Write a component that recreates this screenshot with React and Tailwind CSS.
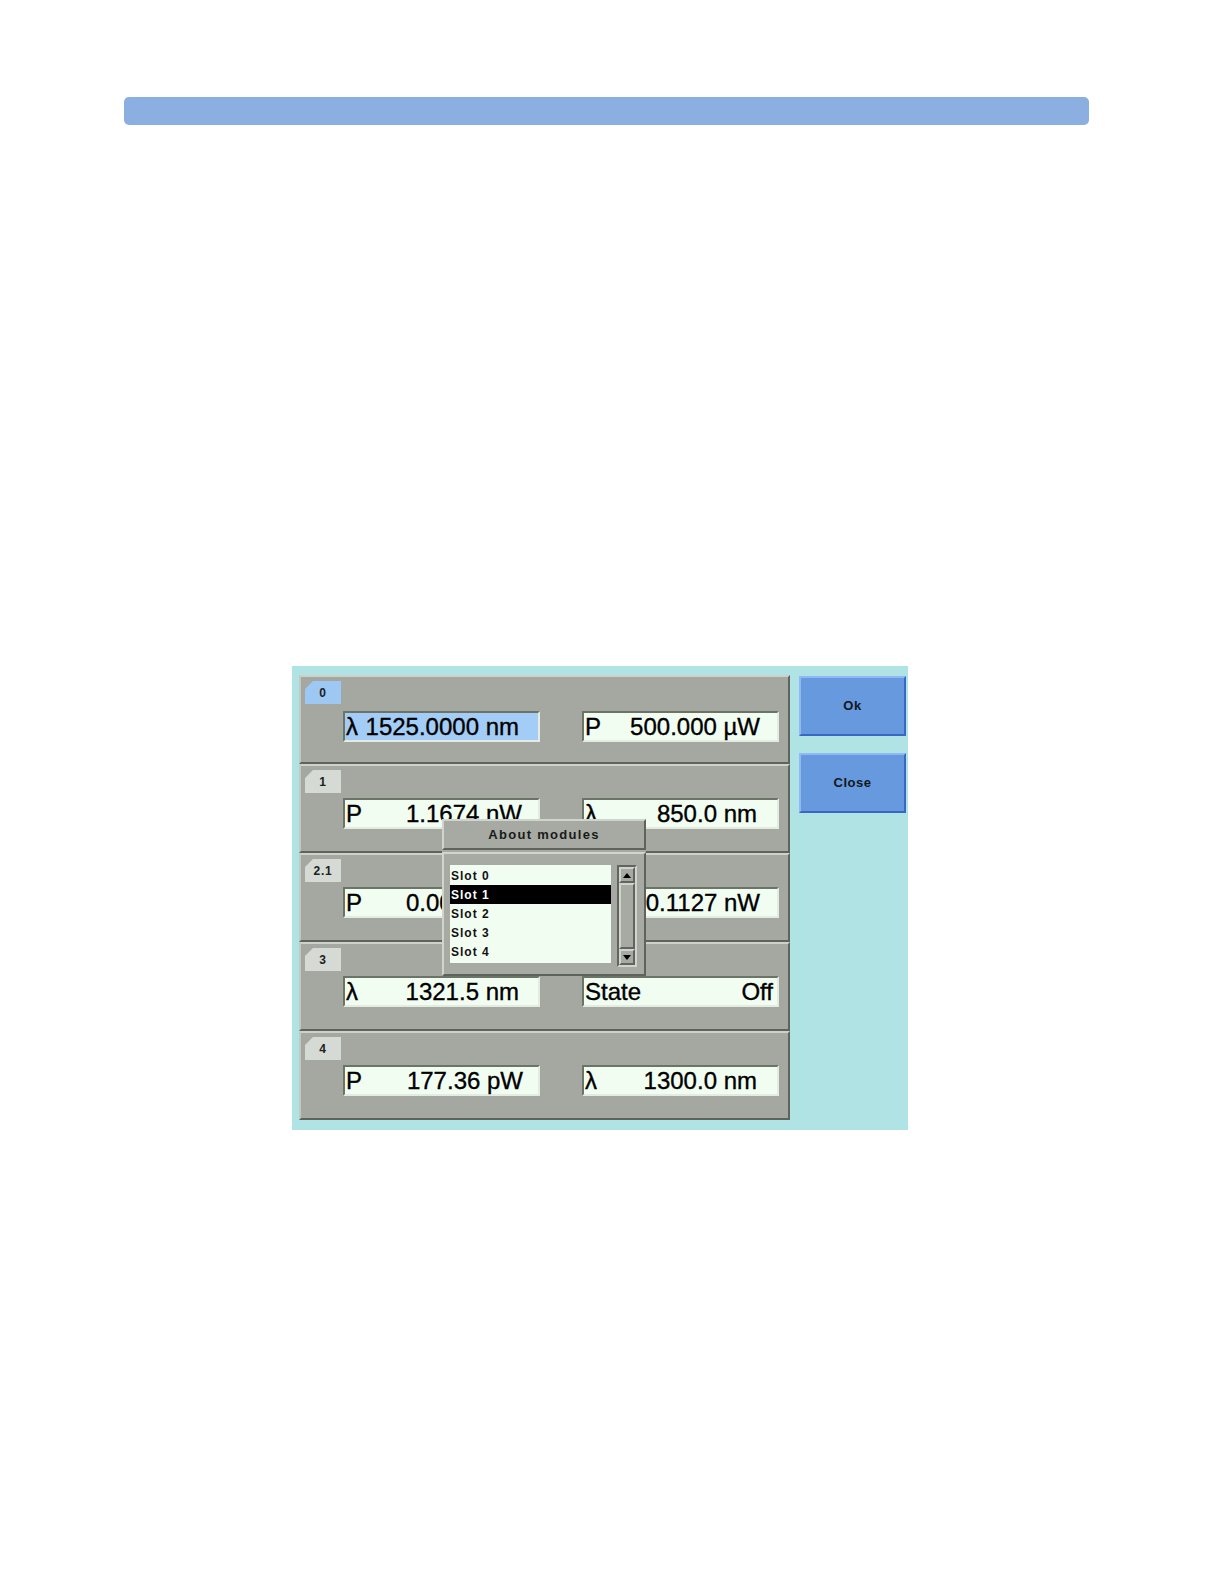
import React from "react";

const rows = [
  { tab: "0", active: true, mt: "mt-[7px]", left: ["λ", "1525.0000 nm", "pr-[19px]", true], right: ["P", "500.000 µW", "pr-[17px]"] },
  { tab: "1", mt: "mt-[5px]", left: ["P", "1.1674 nW", "pr-[16px]"], right: ["λ", "850.0 nm", "pr-[20px]"] },
  { tab: "2.1", mt: "mt-[5px]", left: ["P", "0.0000 nW", "pr-[16px]"], right: ["P", "0.1127 nW", "pr-[17px]"] },
  { tab: "3", mt: "mt-[5px]", left: ["λ", "1321.5 nm", "pr-[19px]"], right: ["State", "Off", "pr-[4px]"] },
  { tab: "4", mt: "mt-[5px]", left: ["P", "177.36 pW", "pr-[15px]"], right: ["λ", "1300.0 nm", "pr-[20px]"] },
];

function Field({ label, value, pr, blue }) {
  return (
    <div
      className={`w-[197px] h-[31px] border-2 border-t-[#6c7468] border-l-[#6c7468] border-b-[#e4ece2] border-r-[#e4ece2] flex items-center justify-between pl-[1px] ${pr} ${
        blue ? "bg-[#a3cdf6]" : "bg-[#f2fdf2]"
      } text-[24px] leading-none text-black [-webkit-text-stroke:0.35px_#000]`}
    >
      <span>{label}</span>
      <span>{value}</span>
    </div>
  );
}

function Row({ r }) {
  return (
    <div className="h-[89px] bg-[#a4a8a0] border-2 border-t-[#cdd1c9] border-l-[#c4c8c0] border-b-[#5e645c] border-r-[#5e645c] pt-[4px] pl-[4px]">
      <div
        className={`w-[36px] h-[23px] flex items-center justify-center text-[12px] font-bold tracking-[0.8px] text-[#202020] [clip-path:polygon(8px_0,100%_0,100%_100%,0_100%,0_8px)] ${
          r.active ? "bg-[#9ec8f4]" : "bg-[#d6dad4]"
        }`}
      >
        {r.tab}
      </div>
      <div className={`flex ${r.mt} pl-[38px] gap-[42px]`}>
        <Field label={r.left[0]} value={r.left[1]} pr={r.left[2]} blue={r.left[3]} />
        <Field label={r.right[0]} value={r.right[1]} pr={r.right[2]} />
      </div>
    </div>
  );
}

function Btn({ children }) {
  return (
    <div className="w-[107px] h-[60px] bg-[#6699dd] border-2 border-t-[#8fb8f4] border-l-[#8fb8f4] border-b-[#3c66c4] border-r-[#3c66c4] flex items-center justify-center text-[13px] font-bold tracking-[0.5px] text-[#101820]">
      {children}
    </div>
  );
}

function Arrow({ up }) {
  return (
    <div className="h-[16px] bg-[#a6aaa2] border-2 border-t-[#d0d4cc] border-l-[#d0d4cc] border-b-[#60665e] border-r-[#60665e] flex items-center justify-center">
      <svg width="8" height="5" viewBox="0 0 8 5">
        {up ? <polygon points="4,0 8,5 0,5" fill="#000" /> : <polygon points="0,0 8,0 4,5" fill="#000" />}
      </svg>
    </div>
  );
}

export default function App() {
  return (
    <div className="w-[1222px] h-[1582px] bg-white overflow-hidden" style={{ fontFamily: '"Liberation Sans", Arial, sans-serif' }}>
      <div className="pt-[97px] pl-[124px]">
        <div className="w-[965px] h-[28px] rounded-[5px] bg-[#8aafe0]" />
      </div>
      <div className="mt-[541px] ml-[292px] w-[616px] h-[464px] bg-[#b0e4e4] relative flex pt-[9px] pl-[7px] gap-[9px]">
        <div className="w-[491px] flex flex-col">
          {rows.map((r) => (
            <Row key={r.tab} r={r} />
          ))}
        </div>
        <div className="flex flex-col gap-[17px] pt-[1px]">
          <Btn>Ok</Btn>
          <Btn>Close</Btn>
        </div>

        <div className="absolute left-[150px] top-[153px] w-[204px] h-[157px] bg-[#a6aaa2] flex flex-col">
          <div className="h-[31px] border-2 border-t-[#d0d4cc] border-l-[#d0d4cc] border-b-[#5e645c] border-r-[#5e645c] flex items-center justify-center text-[13px] font-bold tracking-[1.3px] text-[#1a1a1a]">
            About modules
          </div>
          <div className="mt-[2px] flex-1 border-2 border-t-[#d0d4cc] border-l-[#d0d4cc] border-b-[#5e645c] border-r-[#5e645c] flex gap-[6px] pl-[6px] pt-[11px]">
            <div className="w-[161px] h-[98px] bg-[#f2fdf2] flex flex-col pt-[1px]">
              {["Slot 0", "Slot 1", "Slot 2", "Slot 3", "Slot 4"].map((s, i) => (
                <div
                  key={s}
                  className={`h-[19px] flex items-center pl-[1px] text-[12px] font-bold tracking-[1px] ${
                    i === 1 ? "bg-black text-white" : "text-[#111]"
                  }`}
                >
                  {s}
                </div>
              ))}
            </div>
            <div className="w-[20px] h-[102px] border-2 border-t-[#60665e] border-l-[#60665e] border-b-[#d0d4cc] border-r-[#d0d4cc] bg-[#9a9e96] flex flex-col">
              <Arrow up />
              <div className="flex-1 bg-[#a6aaa2] border-2 border-t-[#d0d4cc] border-l-[#d0d4cc] border-b-[#60665e] border-r-[#60665e]" />
              <Arrow />
            </div>
          </div>
        </div>
      </div>
    </div>
  );
}
